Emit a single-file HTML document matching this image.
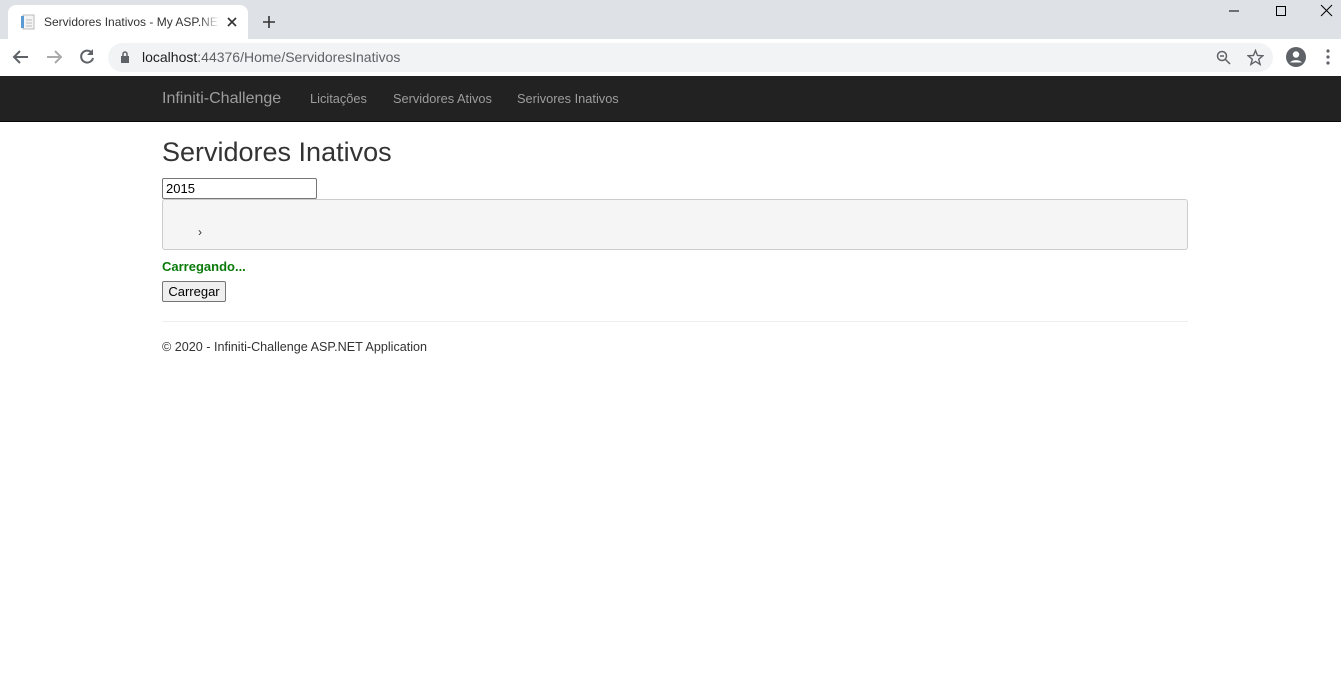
<!DOCTYPE html>
<html><head><meta charset="utf-8"><style>
*{box-sizing:border-box;margin:0;padding:0}
body{width:1341px;height:685px;overflow:hidden;background:#fff;font-family:"Liberation Sans",Arial,sans-serif;position:relative}
.top{position:absolute;left:0;top:0;width:1341px;height:39px;background:#dee1e6}
.tab{position:absolute;left:8px;top:5px;width:240px;height:34px;background:#fff;border-radius:8px 8px 0 0}
.tab .t{position:absolute;left:36px;top:10px;font-size:12px;color:#333;width:176px;overflow:hidden;white-space:nowrap;-webkit-mask-image:linear-gradient(90deg,#000 88%,transparent)}
.bar{position:absolute;left:0;top:39px;width:1341px;height:37px;background:#fff}
.url{position:absolute;left:108px;top:4px;width:1165px;height:29px;background:#f1f3f4;border-radius:15px}
.url .u{position:absolute;left:34px;top:6px;font-size:14px;color:#202124}
.nav{position:absolute;left:0;top:76px;width:1341px;height:46px;background:#222;border-bottom:1px solid #080808}
.nav span{position:absolute;color:#9d9d9d;font-size:12.8px;top:15px}
svg{position:absolute}
</style></head><body>
<div class="top">
<div class="tab">
<svg style="left:12px;top:9px" width="16" height="16"><rect x="3" y="1" width="11" height="14" fill="#f4f4f4" stroke="#bbb"/><rect x="1" y="2" width="3" height="12" fill="#5b9bd5"/><path d="M6 6h6M6 9h6M6 12h6" stroke="#bbb"/></svg>
<div class="t">Servidores Inativos - My ASP.NET</div>
<svg style="left:219px;top:12px" width="10" height="10"><path d="M1 1L9 9M9 1L1 9" stroke="#333" stroke-width="1.6"/></svg>
</div>
<svg style="left:262px;top:15px" width="14" height="14"><path d="M7 1v12M1 7h12" stroke="#333" stroke-width="1.6"/></svg>
<svg style="left:1228px;top:5px" width="12" height="12"><path d="M1 6h10" stroke="#000"/></svg>
<svg style="left:1275px;top:5px" width="12" height="12"><rect x="1.5" y="1.5" width="9" height="9" fill="none" stroke="#000"/></svg>
<svg style="left:1320px;top:4px" width="13" height="13"><path d="M1 1L12 12M12 1L1 12" stroke="#000"/></svg>
</div>
<div class="bar">
<svg style="left:12px;top:10px" width="18" height="16"><path d="M16 8H3M8 2L2 8l6 6" stroke="#5f6368" stroke-width="2" fill="none"/></svg>
<svg style="left:45px;top:10px" width="18" height="16"><path d="M2 8h13M10 2l6 6-6 6" stroke="#aaa" stroke-width="2" fill="none"/></svg>
<svg style="left:78px;top:9px" width="18" height="18"><path d="M14 5A6 6 0 1 0 15 10" stroke="#5f6368" stroke-width="2" fill="none"/><path d="M15 1v6h-6z" fill="#5f6368"/></svg>
<div class="url">
<svg style="left:12px;top:8px" width="10" height="13"><rect x="1" y="5" width="8" height="7" fill="#5f6368"/><path d="M3 5V3a2 2 0 0 1 4 0v2" stroke="#5f6368" fill="none" stroke-width="1.5"/></svg>
<div class="u">localhost<span style="color:#5f6368">:44376/Home/ServidoresInativos</span></div>
<svg style="left:1108px;top:7px" width="16" height="16"><circle cx="6" cy="6" r="4.5" stroke="#5f6368" fill="none" stroke-width="1.5"/><path d="M4 6h4M9.5 9.5L14 14" stroke="#5f6368" stroke-width="1.5"/></svg>
<svg style="left:1139px;top:6px" width="17" height="17"><path d="M8.5 1.5l2 5 5.3.3-4.1 3.4 1.4 5.2-4.6-3-4.6 3 1.4-5.2L1.2 6.8l5.3-.3z" stroke="#5f6368" fill="none" stroke-width="1.4"/></svg>
</div>
<svg style="left:1286px;top:8px" width="20" height="20"><circle cx="10" cy="10" r="10" fill="#5f6368"/><circle cx="10" cy="7.5" r="3.2" fill="#fff"/><path d="M4 15.5a7 5 0 0 1 12 0" fill="#fff"/></svg>
<svg style="left:1326px;top:10px" width="4" height="16"><circle cx="2" cy="2" r="1.6" fill="#5f6368"/><circle cx="2" cy="8" r="1.6" fill="#5f6368"/><circle cx="2" cy="14" r="1.6" fill="#5f6368"/></svg>
</div>
<div class="nav">
<span style="left:162px;top:14px;font-size:16px;">Infiniti-Challenge</span>
<span style="left:310px">Licitações</span>
<span style="left:393px">Servidores Ativos</span>
<span style="left:517px">Serivores Inativos</span>
</div>
<div style="position:absolute;left:162px;top:137px;font-size:27px;color:#333">Servidores Inativos</div>
<div style="position:absolute;left:162px;top:178px;width:155px;height:21px;border:1px solid #767676;border-radius:2px;font-size:13px;padding:2px 3px;color:#000">2015</div>
<div style="position:absolute;left:162px;top:199px;width:1026px;height:51px;background:#f5f5f5;border:1px solid #ccc;border-radius:3px"><span style="position:absolute;left:35px;top:25px;font-size:12px;color:#333">›</span></div>
<div style="position:absolute;left:162px;top:259px;font-size:13px;font-weight:bold;color:#0a7a0a">Carregando...</div>
<div style="position:absolute;left:162px;top:281px;width:64px;height:21px;border:1px solid #767676;border-radius:2px;background:#efefef;font-size:13px;color:#000;text-align:center;line-height:19px">Carregar</div>
<div style="position:absolute;left:162px;top:321px;width:1026px;border-top:1px solid #eee"></div>
<div style="position:absolute;left:162px;top:340px;font-size:12.6px;color:#333">© 2020 - Infiniti-Challenge ASP.NET Application</div>
</body></html>
